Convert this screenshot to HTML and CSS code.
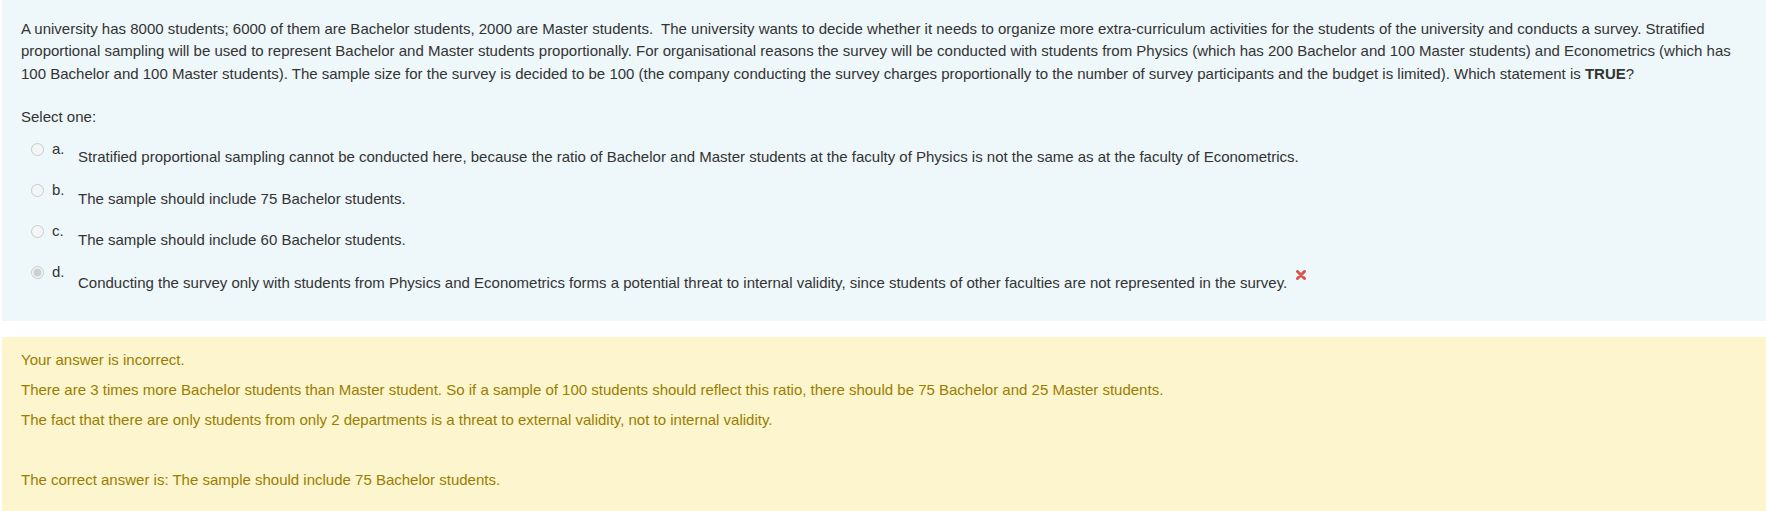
FILE: index.html
```html
<!DOCTYPE html>
<html>
<head>
<meta charset="utf-8">
<link rel="stylesheet" href="styles.css">
</head>
<body>
<div class="que">
  <div class="formulation">
    <div class="qtext">A university has 8000 students; 6000 of them are Bachelor students, 2000 are Master students.&nbsp; The university wants to decide whether it needs to organize more extra-curriculum activities for the students of the university and conducts a survey. Stratified proportional sampling will be used to represent Bachelor and Master students proportionally. For organisational reasons the survey will be conducted with students from Physics (which has 200 Bachelor and 100 Master students) and Econometrics (which has 100 Bachelor and 100 Master students). The sample size for the survey is decided to be 100 (the company conducting the survey charges proportionally to the number of survey participants and the budget is limited). Which statement is <strong>TRUE</strong>?</div>
    <div class="prompt">Select one:</div>
    <div class="answer">
      <div class="option">
        <input type="radio" name="q" disabled>
        <span class="num">a.</span>
        <div class="text">Stratified proportional sampling cannot be conducted here, because the ratio of Bachelor and Master students at the faculty of Physics is not the same as at the faculty of Econometrics.</div>
      </div>
      <div class="option">
        <input type="radio" name="q" disabled>
        <span class="num">b.</span>
        <div class="text">The sample should include 75 Bachelor students.</div>
      </div>
      <div class="option">
        <input type="radio" name="q" disabled>
        <span class="num">c.</span>
        <div class="text">The sample should include 60 Bachelor students.</div>
      </div>
      <div class="option">
        <input type="radio" name="q" disabled checked>
        <span class="num">d.</span>
        <div class="text">Conducting the survey only with students from Physics and Econometrics forms a potential threat to internal validity, since students of other faculties are not represented in the survey.<svg class="wrong" width="10" height="10" viewBox="0 0 10 10"><path d="M1.5 1.5 L8.5 8.5 M8.5 1.5 L1.5 8.5" stroke="#d9534f" stroke-width="3" stroke-linecap="round"/></svg></div>
      </div>
    </div>
  </div>
  <div class="outcome">
    <p>Your answer is incorrect.</p>
    <p>There are 3 times more Bachelor students than Master student. So if a sample of 100 students should reflect this ratio, there should be 75 Bachelor and 25 Master students.</p>
    <p>The fact that there are only students from only 2 departments is a threat to external validity, not to internal validity.</p>
    <p class="empty">&nbsp;</p>
    <p>The correct answer is: The sample should include 75 Bachelor students.</p>
  </div>
</div>
</body>
</html>
```

FILE: styles.css
```css
html, body {
  margin: 0;
  padding: 0;
  background: #ffffff;
}
body {
  font-family: "Liberation Sans", Arial, sans-serif;
  font-size: 15px;
  line-height: 22.5px;
  color: #333333;
}
.que {
  margin-left: 2px;
}
.formulation {
  background: #eef7fa;
  padding: 17.6px 20px 16px 19px;
}
.qtext {
  margin-bottom: 21px;
}
.prompt {
  margin-bottom: 9px;
}
.option {
  display: flex;
  align-items: flex-start;
  margin-left: 10px;
  margin-bottom: 10.1px;
}
.option input {
  margin: 5px 0 0 0;
  width: 13px;
  height: 13px;
  flex: none;
}
.num {
  margin-left: 8px;
  width: 26px;
  flex: none;
}
.text {
  padding-top: 8.7px;
}
.wrong {
  margin-left: 9px;
  vertical-align: 8px;
}
.outcome {
  margin-top: 16px;
  background: #fcf5cd;
  color: #9a7d00;
  padding: 12px 19px 20px 19px;
  min-height: 150px;
}
.outcome p {
  margin: 0 0 7.5px 0;
}
```
